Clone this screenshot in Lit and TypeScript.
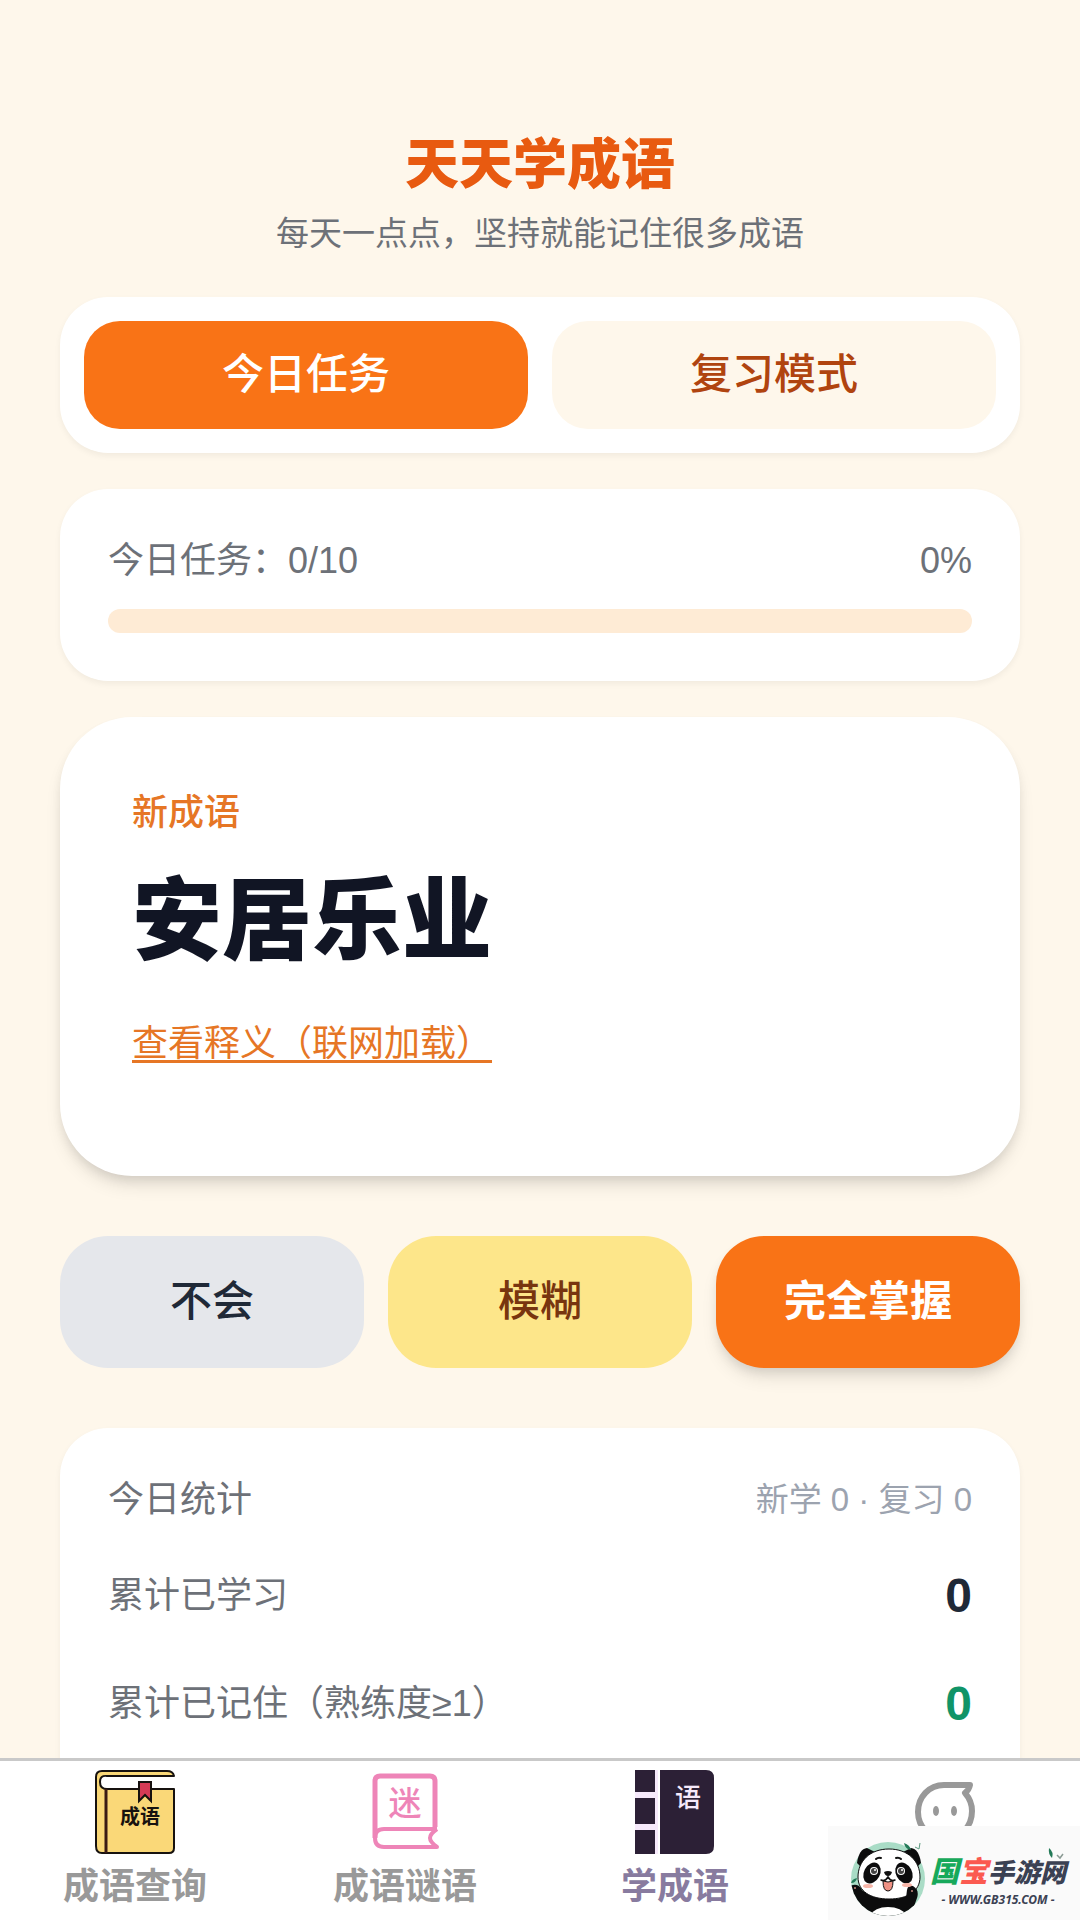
import { LitElement, html, svg, css } from "lit";
import { customElement, state } from "lit/decorators.js";

const bookIcon = svg`
  <svg class="icon" viewBox="0 0 84 84" aria-hidden="true">
    <path d="M81 6Q80 1 74 1H9Q3 1 3 7V76Q3 83 9 83H76Q81 83 81 78V19H14Q7 19 7 12T14 6Z" fill="#fad878"/>
    <path d="M81 6Q80 1 74 1H9Q3 1 3 7V76Q3 83 9 83H76Q81 83 81 78V19H14Q7 19 7 12T14 6H81" fill="none" stroke="#17120f" stroke-width="2" stroke-linejoin="round" stroke-linecap="round"/>
    <path d="M13 19V83" stroke="#3a1a14" stroke-width="3"/>
    <path d="M46 12H58V31L52 25L46 31Z" fill="#d63a55" stroke="#17120f" stroke-width="2"/>
    <text x="47" y="54" text-anchor="middle" class="t1">成语</text>
  </svg>`;

const riddleIcon = svg`
  <svg class="icon" viewBox="0 0 84 84" aria-hidden="true">
    <path d="M12 68V11Q12 6 17 6H67Q72 6 72 11V57" fill="none" stroke="#ee85b8" stroke-width="5"/>
    <path d="M74 59H21Q12 59 12 68T21 77H74Q67 72 67 68T74 59" fill="none" stroke="#ee85b8" stroke-width="4" stroke-linejoin="round"/>
    <text x="42" y="45" text-anchor="middle" class="t2">迷</text>
  </svg>`;

const learnIcon = svg`
  <svg class="icon" viewBox="0 0 84 84" aria-hidden="true">
    <path d="M22 0V84M2 25H24M2 57H24" stroke="#f6e9fb" stroke-width="6"/>
    <path d="M2 0H22V22H2ZM2 28H22V54H2ZM2 60H22V84H2ZM27 0H73Q81 0 81 8V76Q81 84 73 84H27Z" fill="#2c2036"/>
    <text x="55" y="37" text-anchor="middle" class="t3">语</text>
  </svg>`;

const mineIcon = svg`
  <svg class="icon" viewBox="0 0 84 84" aria-hidden="true">
    <path d="M41 15H67Q66 20 62 23Q69 31 69 41C69 57 57 69 42 69S15 57 15 42S26 15 41 15Z" fill="none" stroke="#999" stroke-width="6" stroke-linejoin="round"/>
    <ellipse cx="33" cy="41" rx="3" ry="5" fill="#999"/>
    <ellipse cx="51" cy="41" rx="3" ry="5" fill="#999"/>
  </svg>`;

const panda = svg`
  <svg class="panda" viewBox="10 8 80 80" aria-hidden="true">
    <clipPath id="disc"><circle cx="48" cy="49" r="37"/></clipPath>
    <circle cx="48" cy="49" r="37" fill="#a9dcc6"/>
    <g clip-path="url(#disc)">
      <path d="M10 56Q18 52 22 60Q32 68 48 69T68 62Q66 54 73 56Q79 59 77 68L70 88H26Q12 74 10 56Z" fill="#0c0c0d"/>
      <path d="M29 86Q35 77 48 77T68 86Z" fill="#fff"/>
    </g>
    <path d="M17 33Q19 19 27 18L35 22L22 38Z" fill="#0c0c0d"/>
    <path d="M81 33Q79 19 71 18L63 22L76 38Z" fill="#0c0c0d"/>
    <path d="M49 19C68 19 80 31 80 47C80 61 68 69 49 69S18 61 18 47C18 31 30 19 49 19Z" fill="#fff" stroke="#0c0c0d"/>
    <path d="M67 60Q68 55 73 56Q79 59 77 68L66 68Z" fill="#0c0c0d"/>
    <path d="M36 29Q38 27 41 28M56 28Q59 27 61 29" fill="none" stroke="#111" stroke-width="2" stroke-linecap="round"/>
    <ellipse cx="32" cy="43" rx="8" ry="11" transform="rotate(28 32 43)" fill="#0c0c0d"/>
    <ellipse cx="64" cy="43" rx="8" ry="11" transform="rotate(-28 64 43)" fill="#0c0c0d"/>
    <circle cx="34" cy="41" r="4" fill="#fff"/><circle cx="61" cy="41" r="4" fill="#fff"/>
    <circle cx="34" cy="41" r="3" fill="#444"/><circle cx="61" cy="41" r="3" fill="#444"/>
    <circle cx="35" cy="40" r="1" fill="#fff"/><circle cx="62" cy="40" r="1" fill="#fff"/>
    <path d="M44 42Q48 40 52 42Q51 46 48 46T44 42Z" fill="#111"/>
    <path d="M41 50Q45 52 48 47Q51 52 55 50" fill="none" stroke="#111" stroke-width="1.5" stroke-linecap="round"/>
    <path d="M43 51Q48 53 53 51Q53 61 48 61T43 51Z" fill="#ef9184" stroke="#111"/>
    <ellipse cx="28" cy="56" rx="5" ry="2" fill="#f7b5a8"/><ellipse cx="67" cy="55" rx="5" ry="2" fill="#f7b5a8"/>
    <circle cx="15" cy="58" r="1" fill="#c98b80"/><circle cx="72" cy="61" r="1" fill="#c98b80"/>
    <path d="M64 13Q70 15 71 20Q65 19 64 13ZM11 53Q12 49 17 48Q16 53 11 53Z" fill="#247a58"/>
    <path d="M75 17L79 19L80 13" fill="none" stroke="#5b9a80"/>
  </svg>`;

const leaves = svg`
  <svg class="leaves" viewBox="0 0 16 12" aria-hidden="true">
    <path d="M1 0Q6 4 4 10Q0 6 1 0Z" fill="#247a58"/>
    <path d="M9 7L12 10L15 6" fill="none" stroke="#8a9a94" stroke-width="1.5"/>
  </svg>`;

interface NavItem { label: string; icon: unknown }
const NAV: NavItem[] = [
  { label: "成语查询", icon: bookIcon },
  { label: "成语谜语", icon: riddleIcon },
  { label: "学成语", icon: learnIcon },
  { label: "我的", icon: mineIcon },
];

@customElement("app-root")
export class AppRoot extends LitElement {
  @state() private mode = 0;
  @state() private page = 2;
  @state() private done = 0;
  private total = 10;

  static styles = css`
    :host {
      display: flex;
      flex-direction: column;
      height: 100vh;
      overflow: hidden;
      position: relative;
      background: #fef7eb;
      color: #6d7178;
      font-family: "Liberation Sans", "Noto Sans CJK SC", sans-serif;
      font-size: 36px;
      line-height: 48px;
    }
    * { box-sizing: border-box; margin: 0; }
    button { border: 0; font: inherit; color: inherit; background: none; padding: 0; cursor: pointer; }
    main {
      flex: 1;
      min-height: 0;
      overflow: hidden;
      display: flex;
      flex-direction: column;
      gap: 36px;
      padding: 129px 60px 0;
    }
    main > * { flex-shrink: 0; }
    header { text-align: center; }
    h1 { font-size: 54px; line-height: 72px; font-weight: 900; color: #e85a10; }
    .sub { font-size: 33px; line-height: 48px; padding: 9px 0 3px; }
    .card { background: #fff; border-radius: 48px; padding: 48px; box-shadow: 0 3px 6px rgba(0, 0, 0, 0.05); }
    .tabs { display: grid; grid-template-columns: 1fr 1fr; gap: 24px; padding: 24px; }
    .tab { height: 108px; border-radius: 36px; font-size: 42px; font-weight: 500; background: #fef7eb; color: #b0440f; }
    .tab.on { background: #f97316; color: #fff; }
    .row { display: flex; justify-content: space-between; align-items: center; }
    .bar { height: 24px; border-radius: 12px; background: #feebd5; margin-top: 24px; overflow: hidden; }
    .fill { height: 100%; background: #f97316; }
    .word { border-radius: 72px; padding: 72px; min-height: 459px; box-shadow: 0 12px 18px -3px rgba(0, 0, 0, 0.1), 0 6px 12px -3px rgba(0, 0, 0, 0.1); }
    .tag { color: #e67625; font-weight: 500; }
    h2 { font-size: 90px; line-height: 108px; font-weight: 900; color: #111524; margin-top: 30px; }
    .link { display: inline-block; margin-top: 45px; color: #e67625; text-decoration: underline; text-decoration-thickness: 3px; text-underline-offset: 4px; text-decoration-skip-ink: none; }
    .answers { display: grid; grid-template-columns: repeat(3, 1fr); gap: 24px; margin: 24px 0; }
    .answer { height: 132px; border-radius: 48px; font-size: 42px; font-weight: 500; }
    .no { background: #e5e7eb; color: #1f2937; }
    .vague { background: #fde68a; color: #78350f; }
    .known { background: #f97316; color: #fff; font-weight: 700; box-shadow: 0 12px 18px -3px rgba(0, 0, 0, 0.1), 0 6px 12px -3px rgba(0, 0, 0, 0.1); }
    .stats { padding-bottom: 108px; }
    .small { font-size: 33px; color: #9ca3af; }
    .stat { height: 60px; margin-top: 48px; }
    .stat.first { margin-top: 42px; }
    .num { font-size: 48px; font-weight: 700; color: #1f2937; }
    .num.green { color: #109468; }
    nav { display: grid; grid-template-columns: repeat(4, 1fr); background: #fff; border-top: 3px solid #c9c9c9; height: 162px; }
    .item { display: flex; flex-direction: column; align-items: center; padding-top: 9px; font-weight: 700; color: #999; gap: 9px; }
    .item.on { color: #887b9f; }
    .icon { width: 84px; height: 84px; display: block; }
    .t1 { font: 700 20px "Noto Sans CJK SC", sans-serif; fill: #17120f; }
    .t2 { font: 500 33px "Noto Sans CJK SC", sans-serif; fill: #ee85b8; }
    .t3 { font: 500 26px "Noto Sans CJK SC", sans-serif; fill: #f6e9fb; }
    .mark { position: absolute; right: 0; bottom: 0; width: 252px; height: 94px; background: #fafafa; display: flex; align-items: flex-start; padding: 12px 14px 0 22px; }
    .panda { width: 80px; height: 80px; flex: none; }
    .leaves { position: absolute; right: 16px; top: 22px; width: 16px; height: 12px; }
    .brand { flex: 1; padding-top: 16px; display: flex; flex-direction: column; align-items: center; font-style: italic; font-weight: 900; color: #3b4153; }
    .name { font-size: 26px; line-height: 36px; white-space: nowrap; }
    .big { font-size: 29px; }
    .g { color: #17a95b; }
    .r { color: #fb5a50; }
    .site { font: italic 700 12px/18px "Noto Sans", sans-serif; white-space: nowrap; }
  `;

  render() {
    const pct = Math.round((this.done / this.total) * 100);
    return html`
      <main>
        <header>
          <h1>天天学成语</h1>
          <p class="sub">每天一点点，坚持就能记住很多成语</p>
        </header>
        <div class="card tabs">
          ${["今日任务", "复习模式"].map((t, i) => html`
            <button class="tab ${this.mode === i ? "on" : ""}" @click=${() => (this.mode = i)}>${t}</button>`)}
        </div>
        <section class="card">
          <div class="row"><span>今日任务：${this.done}/${this.total}</span><span>${pct}%</span></div>
          <div class="bar"><div class="fill" style="width:${pct}%"></div></div>
        </section>
        <section class="card word">
          <p class="tag">新成语</p>
          <h2>安居乐业</h2>
          <a class="link" href="#meaning">查看释义（联网加载）</a>
        </section>
        <div class="answers">
          <button class="answer no">不会</button>
          <button class="answer vague">模糊</button>
          <button class="answer known">完全掌握</button>
        </div>
        <section class="card stats">
          <div class="row"><span>今日统计</span><span class="small">新学 0 · 复习 0</span></div>
          <div class="row stat first"><span>累计已学习</span><span class="num">0</span></div>
          <div class="row stat"><span>累计已记住（熟练度≥1）</span><span class="num green">0</span></div>
        </section>
      </main>
      <nav>
        ${NAV.map((n, i) => html`
          <button class="item ${this.page === i ? "on" : ""}" aria-label=${n.label} @click=${() => (this.page = i)}>
            ${n.icon}${i < 3 ? html`<span>${n.label}</span>` : ""}
          </button>`)}
      </nav>
      <aside class="mark">
        ${panda}
        <div class="brand">
          <div class="name"><span class="big g">国</span><span class="big r">宝</span>手游网</div>
          <div class="site">- WWW.GB315.COM -</div>
        </div>
        ${leaves}
      </aside>
    `;
  }
}
